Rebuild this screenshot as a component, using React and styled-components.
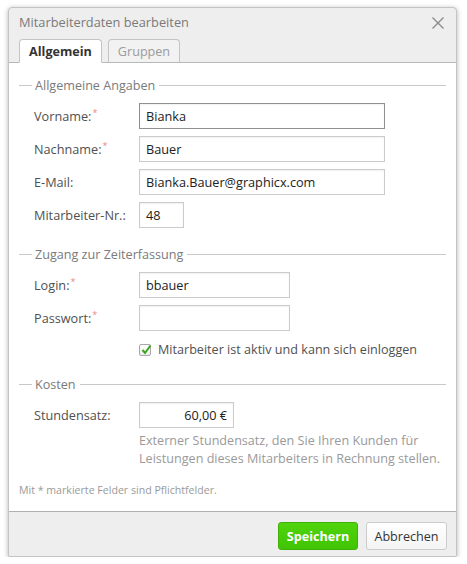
import styled, { createGlobalStyle } from 'styled-components'

const GlobalStyle = createGlobalStyle`
  html, body {
    margin: 0;
    padding: 0;
    background: #ffffff;
    font-family: 'Open Sans', 'Noto Sans', sans-serif;
  }
`

const Dialog = styled.div`
  margin: 7px 0 0 8px;
  width: 449px;
  height: 550px;
  box-sizing: border-box;
  border: 1px solid #c4c4c4;
  border-radius: 4px 4px 2px 2px;
  box-shadow: 0 1px 5px rgba(0, 0, 0, 0.3);
  display: flex;
  flex-direction: column;
  overflow: hidden;
  background: #eeeeee;
`

const TitleBar = styled.div`
  height: 55px;
  padding: 0 10px;
  display: flex;
  flex-direction: column;
  position: relative;
  border-bottom: 1px solid #b8b8b8;
  box-sizing: border-box;
`

const Title = styled.div`
  height: 30px;
  line-height: 29px;
  font-size: 12.8px;
  color: #7a7a7a;
`

const CloseButton = styled.button`
  position: absolute;
  right: 11px;
  top: 8px;
  width: 14px;
  height: 14px;
  padding: 0;
  border: 0;
  background: none;
  cursor: pointer;
`

const Tabs = styled.div`
  display: flex;
  gap: 6px;
  align-items: flex-end;
  height: 25px;
  margin-bottom: -1px;
`

const Tab = styled.div`
  height: 24px;
  box-sizing: border-box;
  padding: 0 9px;
  border: 1px solid #c4c4c4;
  border-bottom: ${({ active }) => (active ? '1px solid #ffffff' : '1px solid #b8b8b8')};
  border-radius: 4px 4px 0 0;
  background: ${({ active }) => (active ? '#ffffff' : '#f2f2f2')};
  color: ${({ active }) => (active ? '#333333' : '#9a9a9a')};
  font-weight: ${({ active }) => (active ? 700 : 400)};
  font-size: 12.6px;
  line-height: 23px;
`

const Body = styled.div`
  flex: 1;
  background: #ffffff;
  padding: 13px 10px 0 10px;
  border-bottom: 1px solid #b0b0b0;
`

const Legend = styled.div`
  display: flex;
  align-items: center;
  height: 18px;
  font-size: 12.6px;
  color: #7a7a7a;
  margin-top: ${({ space = 0 }) => space}px;

  &::before {
    content: '';
    width: 13px;
    height: 1px;
    background: #c8c8c8;
    margin-right: 3px;
  }

  &::after {
    content: '';
    flex: 1;
    height: 1px;
    background: #c8c8c8;
    margin-left: 4px;
  }
`

const Rows = styled.div`
  padding: 5px 0 0 15px;
`

const Row = styled.div`
  display: grid;
  grid-template-columns: 105px 1fr;
  align-items: center;
  height: 33px;
`

const Label = styled.label`
  font-size: 12.7px;
  color: #505050;
  white-space: nowrap;

  sup {
    color: #e58a8a;
    font-size: 9px;
    vertical-align: 5px;
    margin-left: 1px;
  }
`

const Input = styled.input`
  width: ${({ w }) => w}px;
  height: 26px;
  box-sizing: border-box;
  border: 1px solid ${({ focused }) => (focused ? '#8f8f8f' : '#cbcbcb')};
  box-shadow: inset 0 1px 2px rgba(0, 0, 0, 0.06);
  padding: 0 6px;
  font-family: 'Open Sans', 'Noto Sans', sans-serif;
  font-size: 12.7px;
  color: #222222;
  text-align: ${({ right }) => (right ? 'right' : 'left')};
  outline: none;
`

const CheckRow = styled.label`
  display: flex;
  align-items: center;
  gap: 7px;
  height: 31px;
  margin-left: 105px;
  font-size: 12.6px;
  color: #505050;
`

const CheckBox = styled.span`
  width: 12px;
  height: 12px;
  box-sizing: border-box;
  border: 1px solid #a8a8a8;
  border-radius: 2px;
  background: linear-gradient(#ffffff, #ededed);
  position: relative;

  svg {
    position: absolute;
    left: 0;
    top: -2px;
  }
`

const Help = styled.p`
  margin: 1px 0 0 105px;
  font-size: 12.6px;
  line-height: 18px;
  color: #9a9a9a;
`

const Note = styled.p`
  margin: 15px 0 0 0;
  font-size: 10.6px;
  color: #9a9a9a;
`

const Footer = styled.div`
  height: 44px;
  display: flex;
  justify-content: flex-end;
  align-items: center;
  gap: 8px;
  padding: 4px 9px 0 0;
  box-sizing: border-box;
`

const Button = styled.button`
  height: 28px;
  width: ${({ primary }) => (primary ? '80px' : '81px')};
  padding: 0;
  border-radius: 3px;
  font-family: 'Open Sans', 'Noto Sans', sans-serif;
  font-size: 12.6px;
  font-weight: ${({ primary }) => (primary ? 700 : 400)};
  color: ${({ primary }) => (primary ? '#ffffff' : '#333333')};
  border: 1px solid ${({ primary }) => (primary ? '#3fb00a' : '#cccccc')};
  background: ${({ primary }) =>
    primary ? 'linear-gradient(#4fd40c, #40c404)' : 'linear-gradient(#ffffff, #f4f4f4)'};
  cursor: pointer;
`

const Req = () => <sup>*</sup>

export default function App() {
  return (
    <>
      <GlobalStyle />
      <Dialog>
        <TitleBar>
          <Title>Mitarbeiterdaten bearbeiten</Title>
          <CloseButton aria-label="Schließen">
            <svg width="14" height="14" viewBox="0 0 14 14">
              <path d="M1.5 1.5 L12.5 12.5 M12.5 1.5 L1.5 12.5" stroke="#8a8a8a" strokeWidth="1.4" />
            </svg>
          </CloseButton>
          <Tabs>
            <Tab active>Allgemein</Tab>
            <Tab>Gruppen</Tab>
          </Tabs>
        </TitleBar>

        <Body>
          <Legend>Allgemeine Angaben</Legend>
          <Rows>
            <Row>
              <Label>Vorname:<Req /></Label>
              <Input w={246} focused defaultValue="Bianka" />
            </Row>
            <Row>
              <Label>Nachname:<Req /></Label>
              <Input w={246} defaultValue="Bauer" />
            </Row>
            <Row>
              <Label>E-Mail:</Label>
              <Input w={246} defaultValue="Bianka.Bauer@graphicx.com" />
            </Row>
            <Row>
              <Label>Mitarbeiter-Nr.:</Label>
              <Input w={45} defaultValue="48" />
            </Row>
          </Rows>

          <Legend space={14}>Zugang zur Zeiterfassung</Legend>
          <Rows>
            <Row>
              <Label>Login:<Req /></Label>
              <Input w={151} defaultValue="bbauer" />
            </Row>
            <Row>
              <Label>Passwort:<Req /></Label>
              <Input w={151} type="password" />
            </Row>
            <CheckRow>
              <CheckBox>
                <svg width="13" height="13" viewBox="0 0 13 13">
                  <path d="M2.5 7 L5 10 L10.5 2.5" fill="none" stroke="#3aa51a" strokeWidth="2" />
                </svg>
              </CheckBox>
              Mitarbeiter ist aktiv und kann sich einloggen
            </CheckRow>
          </Rows>

          <Legend space={10}>Kosten</Legend>
          <Rows>
            <Row>
              <Label>Stundensatz:</Label>
              <Input w={95} right defaultValue="60,00 €" />
            </Row>
            <Help>
              Externer Stundensatz, den Sie Ihren Kunden für
              <br />
              Leistungen dieses Mitarbeiters in Rechnung stellen.
            </Help>
          </Rows>

          <Note>Mit * markierte Felder sind Pflichtfelder.</Note>
        </Body>

        <Footer>
          <Button primary>Speichern</Button>
          <Button>Abbrechen</Button>
        </Footer>
      </Dialog>
    </>
  )
}
